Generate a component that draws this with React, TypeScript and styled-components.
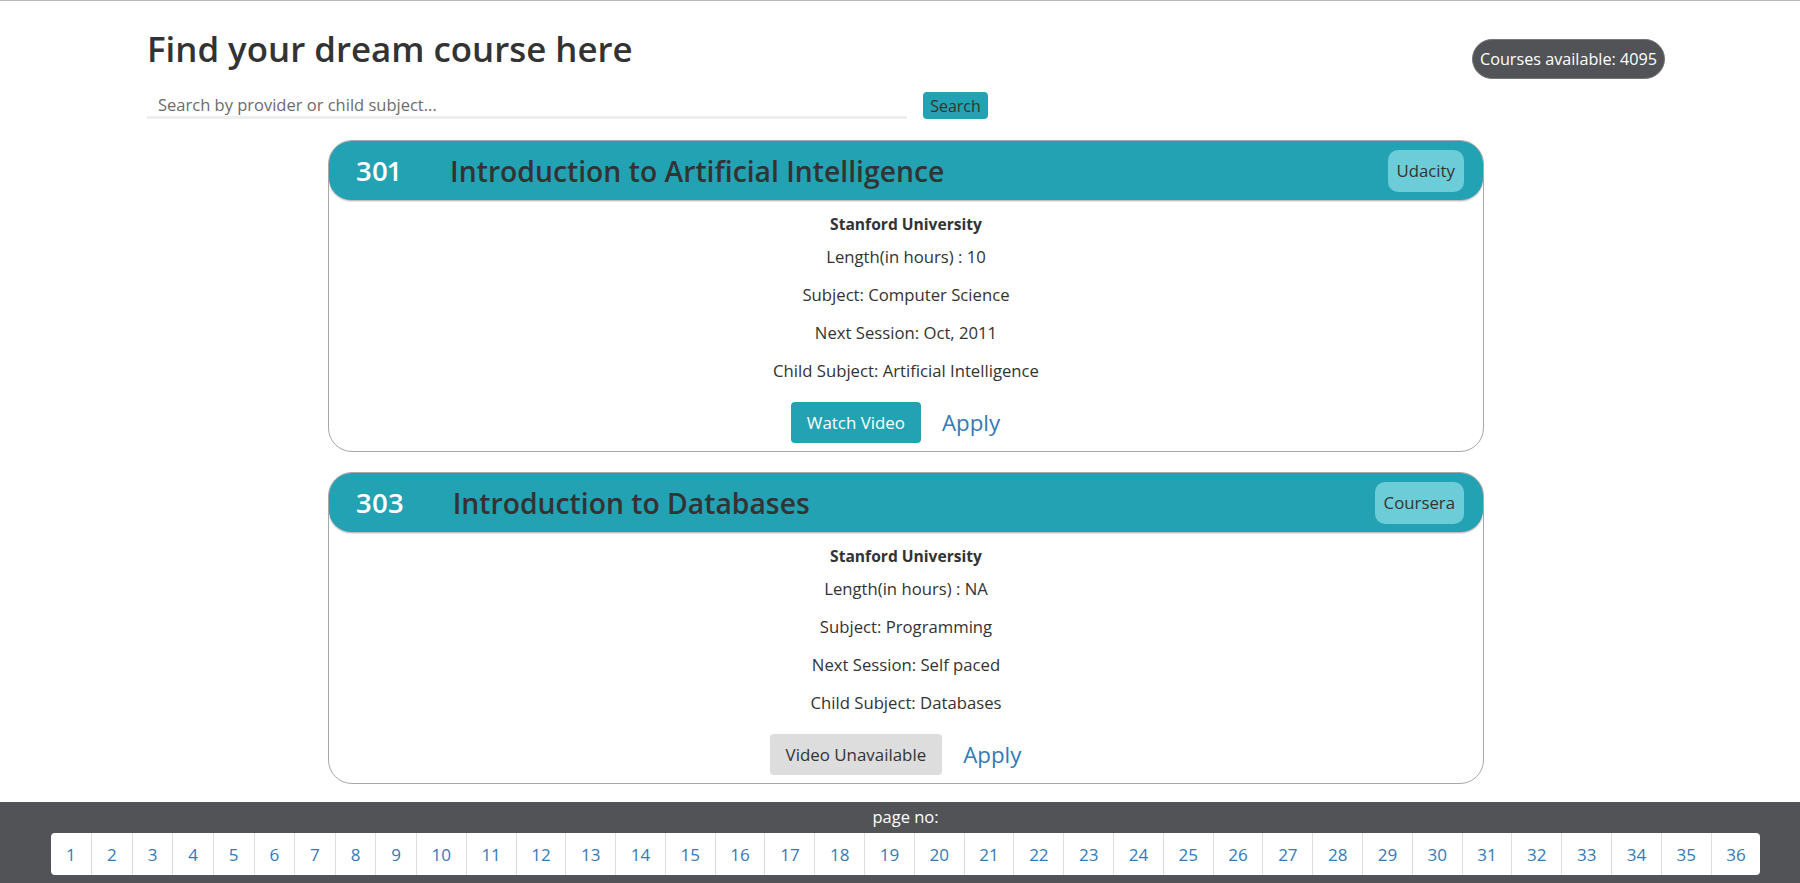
import React from "react";
import styled, { createGlobalStyle } from "styled-components";

const TEAL = "#23a2b4";
const DARK = "#525357";
const LINK = "#337ab7";

const GlobalStyle = createGlobalStyle`
  * { box-sizing: border-box; }
  body {
    margin: 0;
    font-family: "Open Sans", "Noto Sans", sans-serif;
    color: #333;
    background: #fff;
    border-top: 1px solid #b8b8b8;
  }
`;

const Page = styled.div`
  padding-left: 12px;
  display: flex;
  flex-direction: column;
  align-items: center;
`;

const TopBar = styled.header`
  width: 1518px;
  display: flex;
  justify-content: space-between;
  align-items: flex-start;
`;

const TitleBlock = styled.div`
  display: flex;
  flex-direction: column;
`;

const Title = styled.h1`
  margin: 26px 0 0;
  font-size: 34.85px;
  font-weight: 600;
  line-height: 44px;
  color: #333;
`;

const SearchRow = styled.div`
  margin-top: 21px;
  display: flex;
  align-items: flex-end;
`;

const SearchInput = styled.input`
  width: 760px;
  height: 27px;
  border: none;
  border-bottom: 3px solid #eee;
  padding: 0 11px;
  font-family: inherit;
  font-size: 16.5px;
  color: #333;
  outline: none;
  &::placeholder { color: #6c6c6c; }
`;

const SearchButton = styled.button`
  margin-left: 16px;
  height: 27px;
  width: 65px;
  padding: 0;
  border: none;
  border-radius: 4px;
  background: ${TEAL};
  color: #333;
  font-family: inherit;
  font-size: 16px;
`;

const CountBadge = styled.div`
  margin-top: 38px;
  height: 40px;
  padding: 0 7px;
  display: flex;
  align-items: center;
  background: ${DARK};
  border: 1px solid #777;
  border-radius: 20px;
  color: #fff;
  font-size: 16.2px;
`;

const CardList = styled.main`
  margin-top: 21px;
  display: flex;
  flex-direction: column;
  gap: 20px;
`;

const Card = styled.article`
  width: 1156px;
  border: 1px solid #a8a8a8;
  border-radius: 24px;
  overflow: hidden;
`;

const CardHeader = styled.div`
  height: 59px;
  display: flex;
  align-items: center;
  padding: 0 19px 0 27px;
  background: ${TEAL};
  border-radius: 22px;
  box-shadow: 0 -1px 0 #999, 0 1px 2px rgba(0, 0, 0, 0.35);
`;

const CourseId = styled.span`
  color: #fff;
  font-size: 27.5px;
  font-weight: 600;
  font-variant-numeric: proportional-nums;
`;

const CourseName = styled.h2`
  margin: 0 0 0 49px;
  flex: 1;
  font-size: 28.3px;
  font-weight: 600;
  color: #333;
`;

const ProviderBadge = styled.span`
  height: 42px;
  padding: 0 9px;
  display: flex;
  align-items: center;
  background: #6ccdd8;
  border-radius: 10px;
  font-size: 16.8px;
  color: #333;
`;

const CardBody = styled.div`
  padding: 12px 0 8px;
  display: flex;
  flex-direction: column;
  align-items: center;
  text-align: center;
`;

const Institution = styled.div`
  font-size: 15.6px;
  font-weight: 700;
  line-height: 24px;
  margin-bottom: 9px;
`;

const Info = styled.p`
  margin: 0 0 14px;
  font-size: 16.7px;
  line-height: 24px;
`;

const ButtonRow = styled.div`
  margin-top: 5px;
  display: flex;
  align-items: center;
  gap: 21px;
`;

const VideoButton = styled.button<{ $available: boolean }>`
  height: 41px;
  padding: 0 16px;
  border: none;
  border-radius: 4px;
  font-family: inherit;
  font-size: 16.9px;
  background: ${(p) => (p.$available ? TEAL : "#ddd")};
  color: ${(p) => (p.$available ? "#fff" : "#333")};
`;

const ApplyLink = styled.a`
  margin-right: 21px;
  color: ${LINK};
  font-size: 22.3px;
  text-decoration: none;
`;

const Footer = styled.footer`
  margin-top: 18px;
  padding: 4px 0 8px 11px;
  background: ${DARK};
  display: flex;
  flex-direction: column;
  align-items: center;
`;

const FooterLabel = styled.div`
  color: #fff;
  font-size: 16.5px;
  line-height: 22px;
`;

const Pagination = styled.nav`
  margin-top: 5px;
  display: flex;
  height: 42px;
  background: #fff;
  border-radius: 4px;
  overflow: hidden;
`;

const PageItem = styled.a<{ $wide: boolean }>`
  width: ${(p) => (p.$wide ? "49.8px" : "40.6px")};
  display: flex;
  align-items: center;
  justify-content: center;
  border-left: 1px solid #ddd;
  color: ${LINK};
  font-size: 17px;
  &:first-child { border-left: none; }
`;

type Course = {
  id: number;
  name: string;
  provider: string;
  university: string;
  length: string;
  subject: string;
  session: string;
  child: string;
  video: boolean;
};

const courses: Course[] = [
  {
    id: 301,
    name: "Introduction to Artificial Intelligence",
    provider: "Udacity",
    university: "Stanford University",
    length: "10",
    subject: "Computer Science",
    session: "Oct, 2011",
    child: "Artificial Intelligence",
    video: true,
  },
  {
    id: 303,
    name: "Introduction to Databases",
    provider: "Coursera",
    university: "Stanford University",
    length: "NA",
    subject: "Programming",
    session: "Self paced",
    child: "Databases",
    video: false,
  },
];

const pages = Array.from({ length: 36 }, (_, i) => i + 1);

export default function App() {
  return (
    <>
      <GlobalStyle />
      <Page>
        <TopBar>
          <TitleBlock>
            <Title>Find your dream course here</Title>
            <SearchRow>
              <SearchInput placeholder="Search by provider or child subject..." />
              <SearchButton>Search</SearchButton>
            </SearchRow>
          </TitleBlock>
          <CountBadge>Courses available: 4095</CountBadge>
        </TopBar>
        <CardList>
          {courses.map((c) => (
            <Card key={c.id}>
              <CardHeader>
                <CourseId>{c.id}</CourseId>
                <CourseName>{c.name}</CourseName>
                <ProviderBadge>{c.provider}</ProviderBadge>
              </CardHeader>
              <CardBody>
                <Institution>{c.university}</Institution>
                <Info>Length(in hours) : {c.length}</Info>
                <Info>Subject: {c.subject}</Info>
                <Info>Next Session: {c.session}</Info>
                <Info>Child Subject: {c.child}</Info>
                <ButtonRow>
                  <VideoButton $available={c.video}>
                    {c.video ? "Watch Video" : "Video Unavailable"}
                  </VideoButton>
                  <ApplyLink href="#">Apply</ApplyLink>
                </ButtonRow>
              </CardBody>
            </Card>
          ))}
        </CardList>
      </Page>
      <Footer>
        <FooterLabel>page no:</FooterLabel>
        <Pagination>
          {pages.map((p) => (
            <PageItem key={p} $wide={p >= 10}>
              {p}
            </PageItem>
          ))}
        </Pagination>
      </Footer>
    </>
  );
}
